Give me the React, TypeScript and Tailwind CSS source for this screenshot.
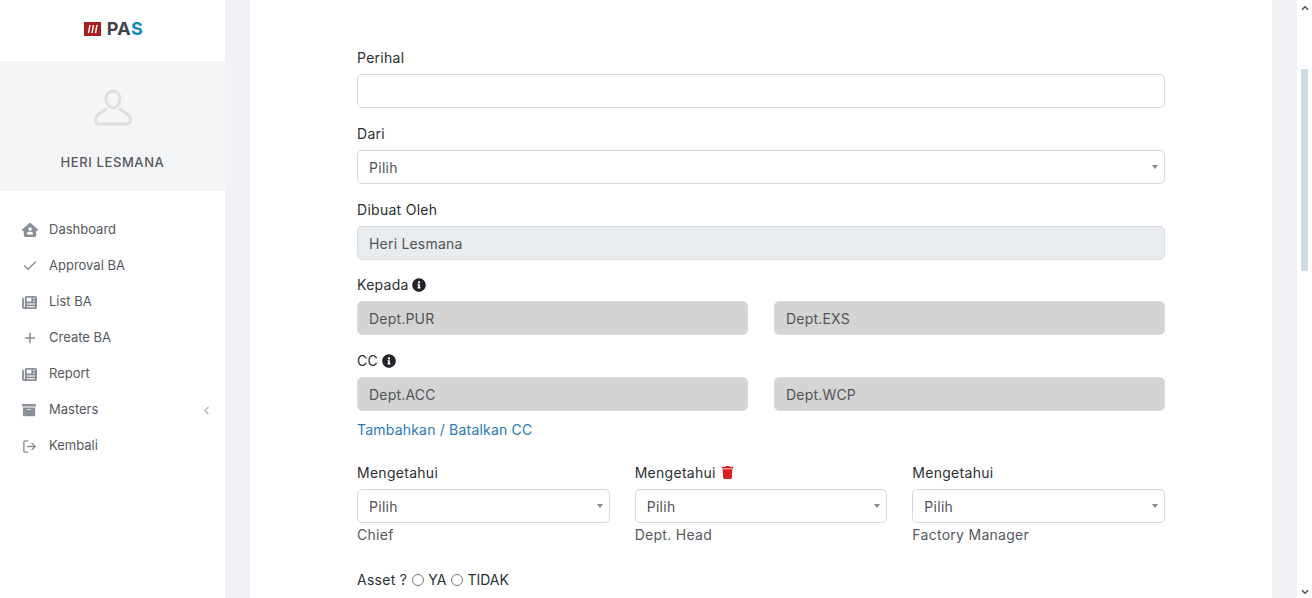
import { Check, ChevronDown, ChevronLeft, ChevronUp, LogOut, Plus } from "lucide-react";
import { FaArchive, FaInfoCircle, FaTrash } from "react-icons/fa";
import { FaHouseUser, FaNewspaper } from "react-icons/fa6";
import type { ReactNode } from "react";

const menu: { label: string; icon: ReactNode; arrow?: boolean }[] = [
	{ label: "Dashboard", icon: <FaHouseUser size={16} /> },
	{ label: "Approval BA", icon: <Check size={16} strokeWidth={2.25} /> },
	{ label: "List BA", icon: <FaNewspaper size={15} /> },
	{ label: "Create BA", icon: <Plus size={16} strokeWidth={2.25} /> },
	{ label: "Report", icon: <FaNewspaper size={15} /> },
	{ label: "Masters", icon: <FaArchive size={14} />, arrow: true },
	{ label: "Kembali", icon: <LogOut size={15} strokeWidth={2.25} /> },
];

function Label({ children }: { children: ReactNode }) {
	return <label className="mb-[6px] flex h-[21px] items-center gap-[3px] text-[14px] text-[#2b2f33]">{children}</label>;
}

function TextBox({ value = "", tone = "white" }: { value?: string; tone?: "white" | "light" | "gray" }) {
	const bg = tone === "white" ? "bg-white border-[#d5d9dd]" : tone === "light" ? "bg-[#e9ecef] border-[#dadee2]" : "bg-[#d4d4d4] border-[#dcdcdc]";
	return (
		<div className={`flex h-[34px] w-full items-center rounded-[5px] border px-[11px] text-[14px] tracking-[0.2px] text-[#505458] ${bg}`}>
			{value}
		</div>
	);
}

function Select() {
	return (
		<div className="flex h-[34px] w-full items-center justify-between rounded-[5px] border border-[#d5d9dd] bg-white pl-[11px] pr-[6px] text-[14px] text-[#505458]">
			Pilih
			<span className="h-0 w-0 border-x-[3px] border-t-[4px] border-x-transparent border-t-[#888]" />
		</div>
	);
}

function Radio({ label }: { label: string }) {
	return (
		<span className="flex items-center gap-[4px] tracking-normal">
			<span className="h-[12px] w-[12px] rounded-full border border-[#777]" />
			{label}
		</span>
	);
}

export default function App() {
	return (
		<div className="flex h-[598px] w-[1312px] overflow-hidden bg-[#eff1f5] font-['Inter',sans-serif]">
			<aside className="flex w-[225px] shrink-0 flex-col bg-white">
				<div className="flex h-[61px] items-center justify-center gap-[6px] pb-[4px] pl-[2px]">
					<svg width="17" height="14" viewBox="0 0 17 14">
						<rect width="17" height="14" fill="#a91e1e" />
						<path d="M6 3 4.500 11M9.500 3 8 11M13 3l-1.500 8" stroke="#fff" strokeWidth="1.4" />
					</svg>
					<span className="text-[18px] font-bold leading-none tracking-[0.5px] text-[#3f4448]">
						PA<span className="text-[#0f88c0]">S</span>
					</span>
				</div>
				<div className="flex h-[130px] flex-col items-center bg-[#f4f5f7] pt-[28px]">
					<svg width="38" height="38" viewBox="0 0 38 38" fill="none" stroke="#dedede" strokeWidth="2.800">
						<path d="M19 2c-4.200 0-7 3.200-7 7.600 0 4.600 3 9.400 7 9.400s7-4.800 7-9.400C26 5.200 23.200 2 19 2Z" />
						<path d="M13 19.500 5.500 24.500C3 26 1.500 28 1.500 31c0 2.500 1.500 4 4 4h27c2.500 0 4-1.500 4-4 0-3-1.500-5-4-6.500L25 19.500" />
					</svg>
					<div className="mt-[26px] text-[13px] font-medium tracking-[0.6px] text-[#55595e]">HERI LESMANA</div>
				</div>
				<nav className="flex flex-col pl-[22px] pr-[12px] pt-[21px]">
					{menu.map((item) => (
						<div key={item.label} className="flex h-[36px] items-center text-[13px] text-[#55595e]">
							<span className="flex w-[27px] shrink-0 items-center text-[#8a9099]">{item.icon}</span>
							<span className="flex-1">{item.label}</span>
							{item.arrow && <ChevronLeft size={13} className="text-[#aab0b6]" />}
						</div>
					))}
				</nav>
			</aside>

			<main className="flex flex-1 px-[25px]">
				<div className="flex-1 bg-white px-[107px] pt-[47px] tracking-[0.28px]">
					<div className="w-[808px]">
						<Label>Perihal</Label>
						<div className="mb-[15px]">
							<TextBox />
						</div>
						<Label>Dari</Label>
						<div className="mb-[15px]">
							<Select />
						</div>
						<Label>Dibuat Oleh</Label>
						<div className="mb-[14px]">
							<TextBox value="Heri Lesmana" tone="light" />
						</div>
						<Label>
							Kepada <FaInfoCircle size={14} className="text-[#212529]" />
						</Label>
						<div className="mb-[15px] grid grid-cols-2 gap-[26px]">
							<TextBox value="Dept.PUR" tone="gray" />
							<TextBox value="Dept.EXS" tone="gray" />
						</div>
						<Label>
							CC <FaInfoCircle size={14} className="ml-[1px] text-[#212529]" />
						</Label>
						<div className="grid grid-cols-2 gap-[26px]">
							<TextBox value="Dept.ACC" tone="gray" />
							<TextBox value="Dept.WCP" tone="gray" />
						</div>
						<div className="mt-[8px] h-[21px] text-[14px] leading-[21px] tracking-[0.2px] text-[#2b7ab5]">Tambahkan / Batalkan CC</div>
						<div className="mt-[22px] grid grid-cols-3 gap-[25px]">
							<div>
								<Label>Mengetahui</Label>
								<Select />
								<div className="mt-[1px] text-[14px] leading-[21px] text-[#55595e]">Chief</div>
							</div>
							<div>
								<Label>
									Mengetahui <FaTrash size={13} className="ml-[2px] text-[#d91f26]" />
								</Label>
								<Select />
								<div className="mt-[1px] text-[14px] leading-[21px] text-[#55595e]">Dept. Head</div>
							</div>
							<div>
								<Label>Mengetahui</Label>
								<Select />
								<div className="mt-[1px] text-[14px] leading-[21px] text-[#55595e]">Factory Manager</div>
							</div>
						</div>
						<div className="mt-[24px] flex h-[21px] items-center gap-[5px] text-[14px] text-[#2b2f33]">
							Asset ? <Radio label="YA" /> <Radio label="TIDAK" />
						</div>
					</div>
				</div>
			</main>

			<div className="flex w-[15px] shrink-0 flex-col items-center bg-white pb-[1px] pt-[3px] text-[#555]">
				<ChevronUp size={10} strokeWidth={4} />
				<div className="mt-[56px] h-[202px] w-[7px] rounded-[1px] bg-[#cfdce6]" />
				<ChevronDown size={10} strokeWidth={4} className="mt-auto" />
			</div>
		</div>
	);
}
